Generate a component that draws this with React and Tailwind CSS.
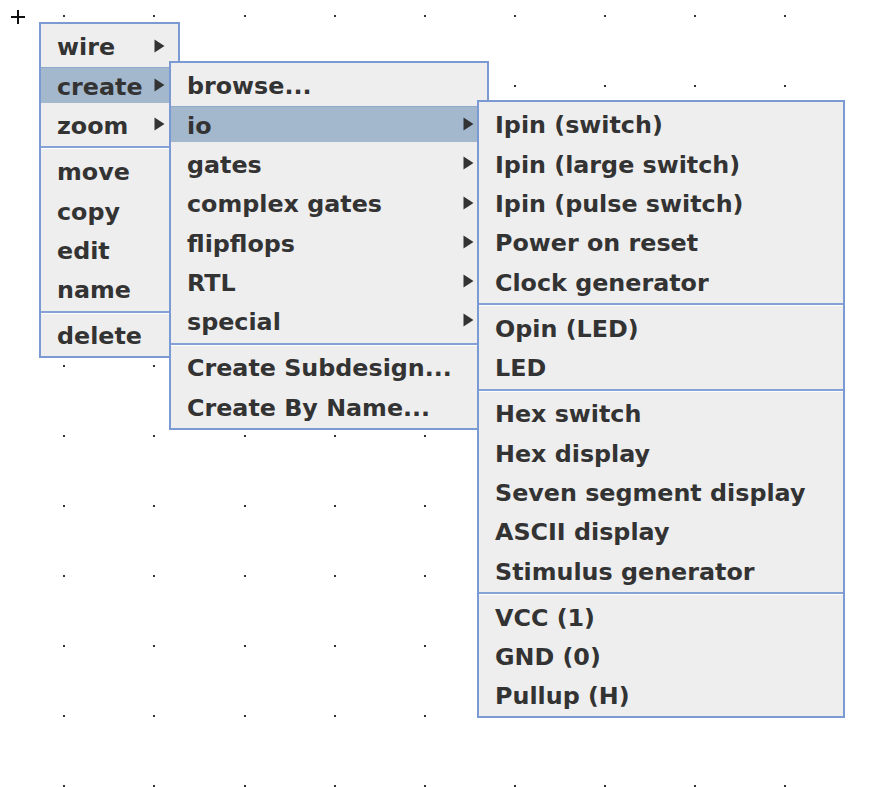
import React from 'react';

// Popup menu tree: wire / create > io / io items
const MAIN_MENU = [
  [
    { label: 'wire', sub: true },
    { label: 'create', sub: true, active: true },
    { label: 'zoom', sub: true },
  ],
  [{ label: 'move' }, { label: 'copy' }, { label: 'edit' }, { label: 'name' }],
  [{ label: 'delete' }],
];

const CREATE_MENU = [
  [
    { label: 'browse...' },
    { label: 'io', sub: true, active: true },
    { label: 'gates', sub: true },
    { label: 'complex gates', sub: true },
    { label: 'flipflops', sub: true },
    { label: 'RTL', sub: true },
    { label: 'special', sub: true },
  ],
  [{ label: 'Create Subdesign...' }, { label: 'Create By Name...' }],
];

const IO_MENU = [
  [
    { label: 'Ipin (switch)' },
    { label: 'Ipin (large switch)' },
    { label: 'Ipin (pulse switch)' },
    { label: 'Power on reset' },
    { label: 'Clock generator' },
  ],
  [{ label: 'Opin (LED)' }, { label: 'LED' }],
  [
    { label: 'Hex switch' },
    { label: 'Hex display' },
    { label: 'Seven segment display' },
    { label: 'ASCII display' },
    { label: 'Stimulus generator' },
  ],
  [{ label: 'VCC (1)' }, { label: 'GND (0)' }, { label: 'Pullup (H)' }],
];

const DOT_COLS = [64, 154, 245, 335, 425, 515, 605, 695, 785];
const DOT_ROWS = Array.from({ length: 12 }, (_, i) => 16 + i * 70);

function Arrow() {
  return (
    <svg width="11" height="14" viewBox="0 0 11 14" className="shrink-0">
      <path d="M0.5 0.5 L10.5 7 L0.5 13.5 Z" fill="#333333" />
    </svg>
  );
}

function MenuItem({ item }) {
  return (
    <div className="h-[39.3px] py-[1.65px]">
      <div
        className={`h-full flex items-center justify-between pl-[16px] pr-[13px] ${
          item.active ? 'bg-[#a3b8cc] border-t border-[#8fa8cc]' : ''
        }`}
      >
        <span className="whitespace-nowrap pt-[5px]">{item.label}</span>
        {item.sub && <Arrow />}
      </div>
    </div>
  );
}

function Separator() {
  return (
    <div className="h-[7px] pt-[2.5px]">
      <div className="h-[2px] bg-[#86a1d6]" />
      <div className="h-[1px] bg-white" />
    </div>
  );
}

function PopupMenu({ groups, className }) {
  return (
    <div
      className={`absolute bg-[#eeeeee] border-2 border-[#7b99d3] py-[2px] text-[23.8px] font-bold text-[#333333] font-['DejaVu_Sans',sans-serif] ${className}`}
    >
      {groups.map((group, gi) => (
        <React.Fragment key={gi}>
          {gi > 0 && <Separator />}
          {group.map((item) => (
            <MenuItem key={item.label} item={item} />
          ))}
        </React.Fragment>
      ))}
    </div>
  );
}

export default function App() {
  return (
    <div className="relative w-[871px] h-[787px] bg-white overflow-hidden">
      {/* editor canvas grid */}
      <svg className="absolute inset-0" width="871" height="787">
        {DOT_ROWS.map((y) =>
          DOT_COLS.map((x) => (
            <rect key={`${x}-${y}`} x={x - 1} y={y - 1} width="2" height="2" fill="#333333" />
          ))
        )}
        {/* cursor cross */}
        <path d="M11 17 H25 M18 10 V24" stroke="#111111" strokeWidth="2" />
      </svg>

      <PopupMenu groups={MAIN_MENU} className="left-[39px] top-[22px] w-[141px]" />
      <PopupMenu groups={CREATE_MENU} className="left-[169px] top-[61px] w-[320px]" />
      <PopupMenu groups={IO_MENU} className="left-[477px] top-[100px] w-[368px]" />
    </div>
  );
}
